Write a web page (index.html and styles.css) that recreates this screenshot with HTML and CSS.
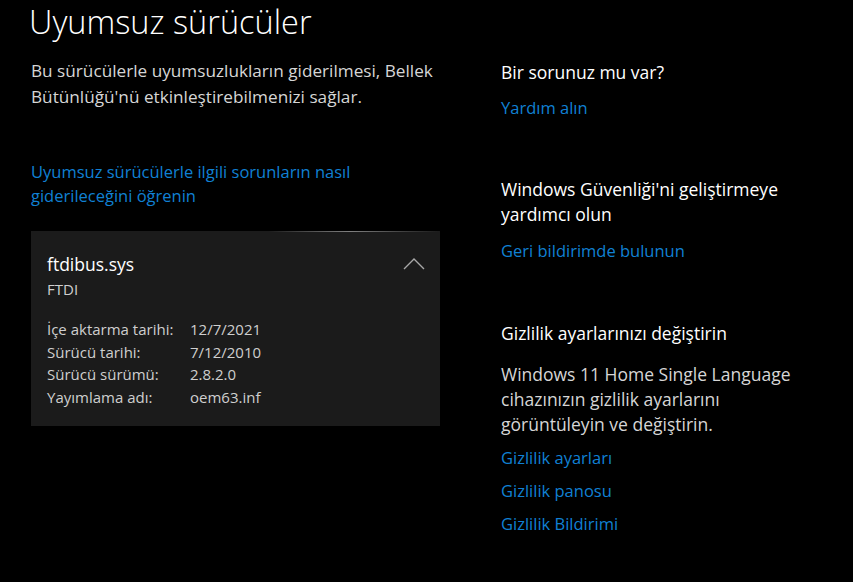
FILE: index.html
```html
<!DOCTYPE html>
<html lang="tr">
<head>
<meta charset="utf-8">
<link rel="stylesheet" href="styles.css">
</head>
<body>
<div class="page">
  <div class="main">
    <h1 class="title">Uyumsuz sürücüler</h1>
    <p class="desc">Bu sürücülerle uyumsuzlukların giderilmesi, Bellek Bütünlüğü'nü etkinleştirebilmenizi sağlar.</p>
    <a class="link left-link">Uyumsuz sürücülerle ilgili sorunların nasıl giderileceğini öğrenin</a>
    <div class="card">
      <div class="card-head">
        <div>
          <div class="drv-name">ftdibus.sys</div>
          <div class="drv-vendor">FTDI</div>
        </div>
        <svg class="chev" width="22" height="13" viewBox="0 0 22 13"><path d="M1 12 L11 2 L21 12" fill="none" stroke="#a8a8a8" stroke-width="1.4"/></svg>
      </div>
      <div class="details">
        <span>İçe aktarma tarihi:</span><span>12/7/2021</span>
        <span>Sürücü tarihi:</span><span>7/12/2010</span>
        <span>Sürücü sürümü:</span><span>2.8.2.0</span>
        <span>Yayımlama adı:</span><span>oem63.inf</span>
      </div>
    </div>
  </div>
  <div class="side">
    <section class="sec s1">
      <h2 class="sh">Bir sorunuz mu var?</h2>
      <a class="link">Yardım alın</a>
    </section>
    <section class="sec s2">
      <h2 class="sh">Windows Güvenliği'ni geliştirmeye yardımcı olun</h2>
      <a class="link">Geri bildirimde bulunun</a>
    </section>
    <section class="sec s3">
      <h2 class="sh">Gizlilik ayarlarınızı değiştirin</h2>
      <p class="sp">Windows 11 Home Single Language cihazınızın gizlilik ayarlarını görüntüleyin ve değiştirin.</p>
      <a class="link">Gizlilik ayarları</a>
      <a class="link">Gizlilik panosu</a>
      <a class="link">Gizlilik Bildirimi</a>
    </section>
  </div>
</div>
</body>
</html>
```
FILE: styles.css
```css
html, body {
  margin: 0;
  padding: 0;
  background: #000;
  height: 100%;
  overflow: hidden;
}
body {
  font-family: "Open Sans", "Noto Sans", sans-serif;
  color: #fff;
}
.page {
  display: flex;
  padding-left: 31px;
}
.main {
  width: 409px;
  display: flex;
  flex-direction: column;
}
.title {
  margin: 0 0 0 -2px;
  padding-top: 1px;
  font-weight: 300;
  font-size: 32.5px;
  line-height: 41px;
  white-space: nowrap;
}
.desc {
  margin: 16px -6px 0 0;
  font-size: 17.2px;
  line-height: 26px;
  color: #d6d6d6;
}
.link {
  display: block;
  color: #1080d4;
  font-size: 16.5px;
  line-height: 24px;
}
.left-link {
  margin-top: 50px;
  width: 360px;
}
.card {
  margin-top: 23px;
  background: #1b1b1b;
  height: 195px;
  box-sizing: border-box;
  padding: 20px 15px 0 16px;
  position: relative;
}
.card::before {
  content: "";
  position: absolute;
  left: 0;
  right: 0;
  top: 0;
  height: 1px;
  background: linear-gradient(90deg, rgba(255,255,255,0) 58%, rgba(170,170,170,0.7) 78%, rgba(120,120,120,0.35) 92%, rgba(255,255,255,0) 100%);
}
.card-head {
  display: flex;
  justify-content: space-between;
  align-items: flex-start;
}
.drv-name {
  font-size: 17.5px;
  line-height: 26px;
}
.drv-vendor {
  font-size: 15px;
  line-height: 24px;
  color: #cfcfcf;
}
.chev {
  margin-top: 6px;
}
.details {
  margin-top: 17px;
  display: grid;
  grid-template-columns: 143px auto;
  font-size: 15px;
  line-height: 22.5px;
  color: #cfcfcf;
}
.side {
  margin-left: 61px;
  display: flex;
  flex-direction: column;
  padding-top: 60px;
}
.sec {
  display: flex;
  flex-direction: column;
}
.sh {
  margin: 0;
  font-weight: 400;
  font-size: 17.5px;
  line-height: 25px;
  width: 300px;
}
.s1 .link { margin-top: 11px; }
.s2 { margin-top: 57px; }
.s2 .link { margin-top: 12px; }
.s3 { margin-top: 58px; }
.sp {
  margin: 16px 0 0 0;
  font-size: 17.5px;
  line-height: 25px;
  color: #d6d6d6;
  width: 300px;
}
.s3 .link { margin-top: 9px; }
.s3 .link + .link { margin-top: 9px; }
```
